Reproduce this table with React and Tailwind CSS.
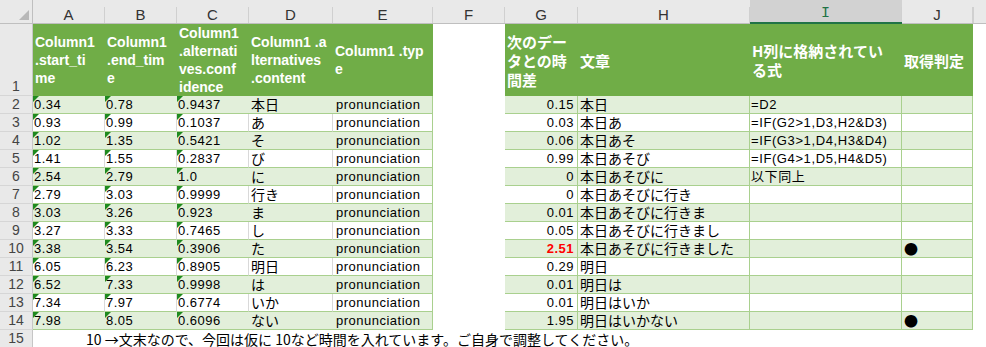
const LATIN = "font-['Liberation_Sans','Noto_Sans_CJK_JP',sans-serif]"
const CJK = "font-['Noto_Sans_CJK_JP',sans-serif]"

const LETTERS = ['A', 'B', 'C', 'D', 'E', 'F', 'G', 'H', 'I', 'J']

const ROWS = [
  ['0.34', '0.78', '0.9437', '本日', '0.15', '本日', '=D2', ''],
  ['0.93', '0.99', '0.1037', 'あ', '0.03', '本日あ', '=IF(G2>1,D3,H2&D3)', ''],
  ['1.02', '1.35', '0.5421', 'そ', '0.06', '本日あそ', '=IF(G3>1,D4,H3&D4)', ''],
  ['1.41', '1.55', '0.2837', 'び', '0.99', '本日あそび', '=IF(G4>1,D5,H4&D5)', ''],
  ['2.54', '2.79', '1.0', 'に', '0', '本日あそびに', '以下同上', ''],
  ['2.79', '3.03', '0.9999', '行き', '0', '本日あそびに行き', '', ''],
  ['3.03', '3.26', '0.923', 'ま', '0.01', '本日あそびに行きま', '', ''],
  ['3.27', '3.33', '0.7465', 'し', '0.05', '本日あそびに行きまし', '', ''],
  ['3.38', '3.54', '0.3906', 'た', '2.51', '本日あそびに行きました', '', '●'],
  ['6.05', '6.23', '0.8905', '明日', '0.29', '明日', '', ''],
  ['6.52', '7.33', '0.9998', 'は', '0.01', '明日は', '', ''],
  ['7.34', '7.97', '0.6774', 'いか', '0.01', '明日はいか', '', ''],
  ['7.98', '8.05', '0.6096', 'ない', '1.95', '明日はいかない', '', '●'],
]

function RowHead({ n }) {
  return (
    <div className={`flex items-end justify-center bg-[#e9e9e9] border-r border-b border-r-[#c6c6c6] border-b-[#d6d6d6] text-[14px] leading-[17px] text-[#444] ${LATIN}`}>
      {n}
    </div>
  )
}

// number-stored-as-text marker
function TextNum({ value, band }) {
  return (
    <div className={`relative flex items-center pl-[1px] border-b border-[#a9d08e] text-[13px] tracking-[0.5px] leading-[17px] text-black ${LATIN} ${band ? 'bg-[#e2efda]' : 'bg-white border-r border-r-[#d9d9d9]'}`}>
      <span className="absolute left-0 top-0 w-0 h-0 border-t-[6px] border-r-[6px] border-t-[#1f8a1f] border-r-transparent" />
      {value}
    </div>
  )
}

function HeadCell({ lines, cjk }) {
  return (
    <div className={`flex items-center bg-[#70ad47] pl-[2px] whitespace-nowrap text-white font-bold ${cjk ? `text-[15px] leading-[19px] ${CJK}` : `text-[14px] leading-[18px] ${LATIN}`}`}>
      <div>
        {lines.map((l, i) => (
          <div key={i}>{l}</div>
        ))}
      </div>
    </div>
  )
}

export default function App() {
  return (
    <div className="w-[986px] h-[347px] overflow-hidden bg-white">
      <div className="grid grid-cols-[33px_72px_72px_72px_84px_100px_72px_73px_172px_152px_71px_1fr] grid-rows-[24px_72px_repeat(14,18px)]">
        {/* column letters */}
        <div className="relative bg-[#e9e9e9] border-r border-b border-[#bfbfbf]">
          <span className="absolute left-[19px] top-[10px] w-0 h-0 border-l-[10px] border-b-[10px] border-l-transparent border-b-[#b8b8b8]" />
        </div>
        {LETTERS.map((l) => (
          <div key={l} className={`pt-[7px] ${l === 'I' ? 'bg-[#d2d2d2] border-b-2 border-[#217346]' : 'bg-[#e9e9e9] border-b border-[#bfbfbf]'}`}>
            <div className={`h-full flex items-center justify-center border-r border-[#d0d0d0] ${l === 'I' ? "font-['Liberation_Mono',monospace] text-[15px] text-[#217346]" : `${LATIN} text-[15px] text-[#333]`}`}>
              {l}
            </div>
          </div>
        ))}
        <div className="pt-[7px] bg-[#e9e9e9] border-b border-[#bfbfbf]">
          <div className="h-full border-l border-[#d0d0d0]" />
        </div>

        {/* row 1: table headers */}
        <RowHead n={1} />
        <HeadCell lines={['Column1', '.start_ti', 'me']} />
        <HeadCell lines={['Column1', '.end_tim', 'e']} />
        <HeadCell lines={['Column1', '.alternati', 'ves.conf', 'idence']} />
        <HeadCell lines={['Column1 .a', 'lternatives', '.content']} />
        <HeadCell lines={['Column1 .typ', 'e']} />
        <div className="bg-white" />
        <HeadCell lines={['次のデー', 'タとの時', '間差']} cjk />
        <HeadCell lines={['文章']} cjk />
        <HeadCell lines={['H列に格納されてい', 'る式']} cjk />
        <HeadCell lines={['取得判定']} cjk />
        <div className="bg-white" />

        {/* rows 2-14 */}
        {ROWS.map((r, i) => {
          const n = i + 2
          const band = n % 2 === 0
          const bg = band ? 'bg-[#e2efda]' : 'bg-white'
          const grey = band ? '' : 'border-r border-r-[#d9d9d9]'
          const red = r[4] === '2.51'
          return [
            <RowHead key={`h${n}`} n={n} />,
            <TextNum key={`a${n}`} value={r[0]} band={band} />,
            <TextNum key={`b${n}`} value={r[1]} band={band} />,
            <TextNum key={`c${n}`} value={r[2]} band={band} />,
            <div key={`d${n}`} className={`flex items-center pl-[2px] border-b border-b-[#a9d08e] text-[14px] leading-[17px] text-black ${CJK} ${bg} ${grey}`}>
              {r[3]}
            </div>,
            <div key={`e${n}`} className={`flex items-center pl-[3px] border-b border-r border-[#a9d08e] text-[13px] tracking-[0.5px] leading-[17px] text-black ${LATIN} ${bg}`}>
              pronunciation
            </div>,
            <div key={`f${n}`} className="bg-white" />,
            <div key={`g${n}`} className={`flex items-center justify-end pr-[3px] border-b border-r border-[#a9d08e] text-[13px] tracking-[0.5px] leading-[17px] ${LATIN} ${bg} ${red ? 'text-[#ff0000] font-bold' : 'text-black'}`}>
              {r[4]}
            </div>,
            <div key={`h2${n}`} className={`flex items-center pl-[2px] border-b border-r border-[#a9d08e] text-[14px] leading-[17px] text-black whitespace-nowrap ${CJK} ${bg}`}>
              {r[5]}
            </div>,
            <div key={`i${n}`} className={`flex items-center pl-[1px] border-b border-r border-[#a9d08e] text-[13px] tracking-[0.6px] leading-[17px] text-black whitespace-nowrap ${LATIN} ${bg}`}>
              {r[6]}
            </div>,
            <div key={`j${n}`} className={`flex items-center pl-[2px] border-b border-r border-[#a9d08e] text-[14px] leading-[17px] text-black ${CJK} ${bg}`}>
              {r[7]}
            </div>,
            <div key={`k${n}`} className="bg-white" />,
          ]
        })}

        {/* row 15: note */}
        <RowHead n={15} />
        <div className={`col-span-11 flex items-center pl-[53px] whitespace-nowrap text-[14px] leading-[17px] text-black ${CJK} bg-white`}>
          10 →文末なので、今回は仮に 10など時間を入れています。ご自身で調整してください。
        </div>
      </div>
    </div>
  )
}
